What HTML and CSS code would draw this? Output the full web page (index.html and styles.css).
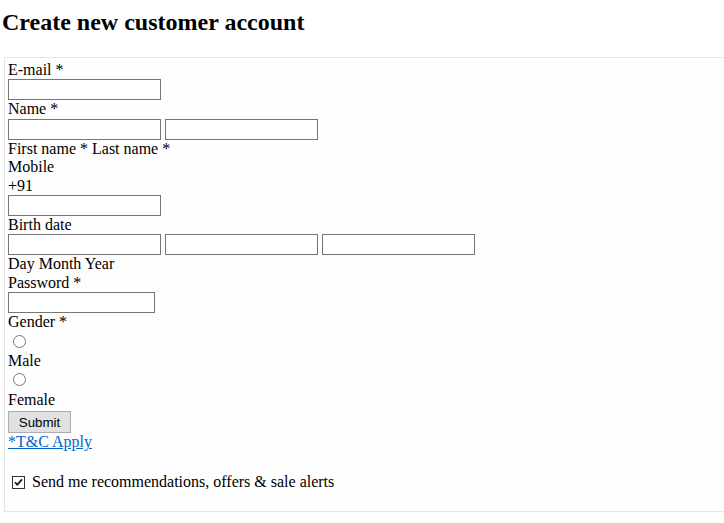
FILE: index.html
```html
<!DOCTYPE html>
<html>
  <head>
    <meta charset="UTF-8">
    <title>Create new customer account</title>
    <link rel="stylesheet" href="styles.css">
  </head>
  <body>
    <h2 class="titulo">Create new customer account</h2>
    <form id="registro" action="">
      <div class="campo">
        <label for="email">E-mail *</label><br>
        <input type="email" id="email" name="email" class="texto">
      </div>
      <div class="campo">
        <label>Name *</label><br>
        <input type="text" name="first" class="texto"> <input type="text" name="last" class="texto"><br>
        <span>First name *</span> <span>Last name *</span>
      </div>
      <div class="campo">
        <label for="mobile">Mobile</label><br>
        <span>+91</span><br>
        <input type="tel" id="mobile" name="mobile" class="texto">
      </div>
      <div class="campo">
        <label>Birth date</label><br>
        <input type="text" name="day" class="texto"> <input type="text" name="month" class="texto"> <input type="text" name="year" class="texto"><br>
        <span>Day</span> <span>Month</span> <span>Year</span>
      </div>
      <div class="campo">
        <label for="password">Password *</label><br>
        <input type="password" id="password" name="password" class="texto clave">
      </div>
      <div class="campo">
        <label>Gender *</label><br>
        <input type="radio" name="gender" id="male" class="radio"><br>
        <label for="male">Male</label><br>
        <input type="radio" name="gender" id="female" class="radio"><br>
        <label for="female">Female</label>
      </div>
      <button type="submit" class="enviar">Submit</button><br>
      <a href="#" class="terminos">*T&amp;C Apply</a>
      <p class="ofertas">
        <span class="check">
          <svg width="13" height="13" viewBox="0 0 13 13">
            <rect x="0.5" y="0.5" width="12" height="12" fill="#fff" stroke="#333"/>
            <path d="M3 6.2 L5.3 8.8 L10 3.4" fill="none" stroke="#111" stroke-width="1.7"/>
          </svg>
        </span>
        Send me recommendations, offers &amp; sale alerts
      </p>
    </form>
  </body>
</html>
```

FILE: styles.css
```css
body {
  margin: 0;
  padding: 9px 0 0 2px;
  font-family: "Liberation Serif", "Times New Roman", serif;
  font-size: 16px;
  line-height: 1.15;
  color: #000;
  overflow-x: hidden;
}

.titulo {
  font-size: 24px;
  font-weight: bold;
  line-height: normal;
  margin: 0 0 21px;
}

#registro {
  margin: 0 -30px 0 2px;
  padding: 3px;
  border: 1px solid #e5e5e5;
  background-color: #fefefe;
}

.texto {
  box-sizing: border-box;
  width: 153px;
  height: 21px;
  margin: 0;
  padding: 1px 3px;
  border: 1px solid #767676;
  border-radius: 0;
  background: #fff;
  font-family: "Liberation Sans", Arial, sans-serif;
  font-size: 13.33px;
  vertical-align: -1px;
}

.clave {
  width: 147px;
}

.radio {
  margin: 3px 3px 0 5px;
}

.enviar {
  box-sizing: border-box;
  width: 63px;
  height: 22px;
  margin: 2px 0 0;
  padding: 1px 6px;
  border: 1px solid #adadad;
  border-radius: 0;
  background: #e1e1e1;
  font-family: "Liberation Sans", Arial, sans-serif;
  font-size: 13.33px;
  color: #000;
}

.terminos {
  color: #0066cc;
}

.ofertas {
  margin: 21px 0 14px;
}

.check {
  display: inline-block;
  margin: 3px 3px 0 4px;
  vertical-align: -2px;
}
```
